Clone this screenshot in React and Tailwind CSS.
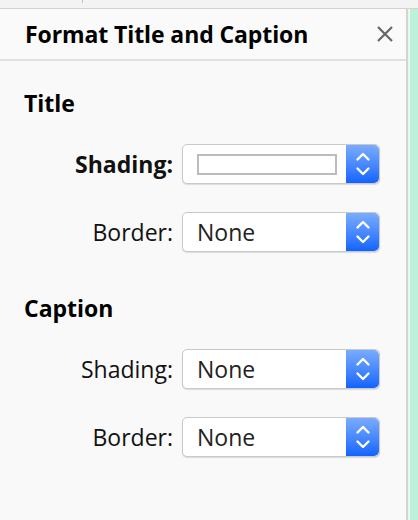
import React from "react";

function Stepper() {
  return (
    <div className="w-[33px] h-full rounded-r-[5px] bg-gradient-to-b from-[#7aabff] to-[#0f63ff] flex items-center justify-center">
      <svg width="16" height="26" viewBox="0 0 16 26" fill="none">
        <path d="M2.5 8.5 L8 3 L13.5 8.5" stroke="white" strokeWidth="2.4" strokeLinecap="round" strokeLinejoin="round" />
        <path d="M2.5 17.5 L8 23 L13.5 17.5" stroke="white" strokeWidth="2.4" strokeLinecap="round" strokeLinejoin="round" />
      </svg>
    </div>
  );
}

function Select({ children }) {
  return (
    <div className="w-[198px] h-[40px] rounded-[5px] border border-[#c9c9c9] bg-white shadow-[0_1px_1px_rgba(0,0,0,0.12)] flex">
      <div className="flex-1 flex items-center pl-[14px] text-[23px] text-[#222]">{children}</div>
      <Stepper />
    </div>
  );
}

function Row({ label, bold, children, mt }) {
  return (
    <div className={`flex items-center ${mt}`}>
      <div className={`w-[182px] text-right pr-[9px] text-[23px] text-[#111] ${bold ? "font-bold" : ""}`}>{label}</div>
      <Select>{children}</Select>
    </div>
  );
}

export default function App() {
  return (
    <div className="w-[418px] h-[520px] flex flex-col bg-[#f9f9f9] overflow-hidden" style={{ fontFamily: "'Open Sans', sans-serif" }}>
      <div className="h-[9px] bg-[#f3f3f3] border-b border-[#d3d3d3] relative">
        <div className="absolute left-[82px] top-0 w-px h-[3px] bg-[#c4c4c4]" />
      </div>
      <div className="flex-1 flex">
        <div className="w-[408px] border-r-2 border-[#d4d4d4] flex flex-col">
          <div className="h-[52px] bg-[#fafafa] border-b-2 border-[#e0e0e0] flex items-center justify-between pl-[25px] pr-[13px]">
            <div className="text-[23px] font-bold text-black tracking-[-0.1px]">Format Title and Caption</div>
            <svg width="16" height="16" viewBox="0 0 16 16">
              <path d="M1 1 L15 15 M15 1 L1 15" stroke="#666" strokeWidth="2.2" />
            </svg>
          </div>
          <div className="flex-1 bg-[#f9f9f9]">
            <div className="mt-[28px] pl-[24px] h-[28px] leading-[28px] text-[23px] font-bold text-black">Title</div>
            <Row label="Shading:" bold mt="mt-[27px]">
              <div className="w-[140px] h-[21px] border-2 border-[#bcbcbc] bg-white" />
            </Row>
            <Row label="Border:" mt="mt-[28px]">None</Row>
            <div className="mt-[42px] pl-[24px] h-[28px] leading-[28px] text-[23px] font-bold text-black">Caption</div>
            <Row label="Shading:" mt="mt-[27px]">None</Row>
            <Row label="Border:" mt="mt-[28px]">None</Row>
          </div>
        </div>
        <div className="w-[2px] bg-[#e6f9f0]" />
        <div className="flex-1 bg-[#bdf1d9]" />
      </div>
    </div>
  );
}
